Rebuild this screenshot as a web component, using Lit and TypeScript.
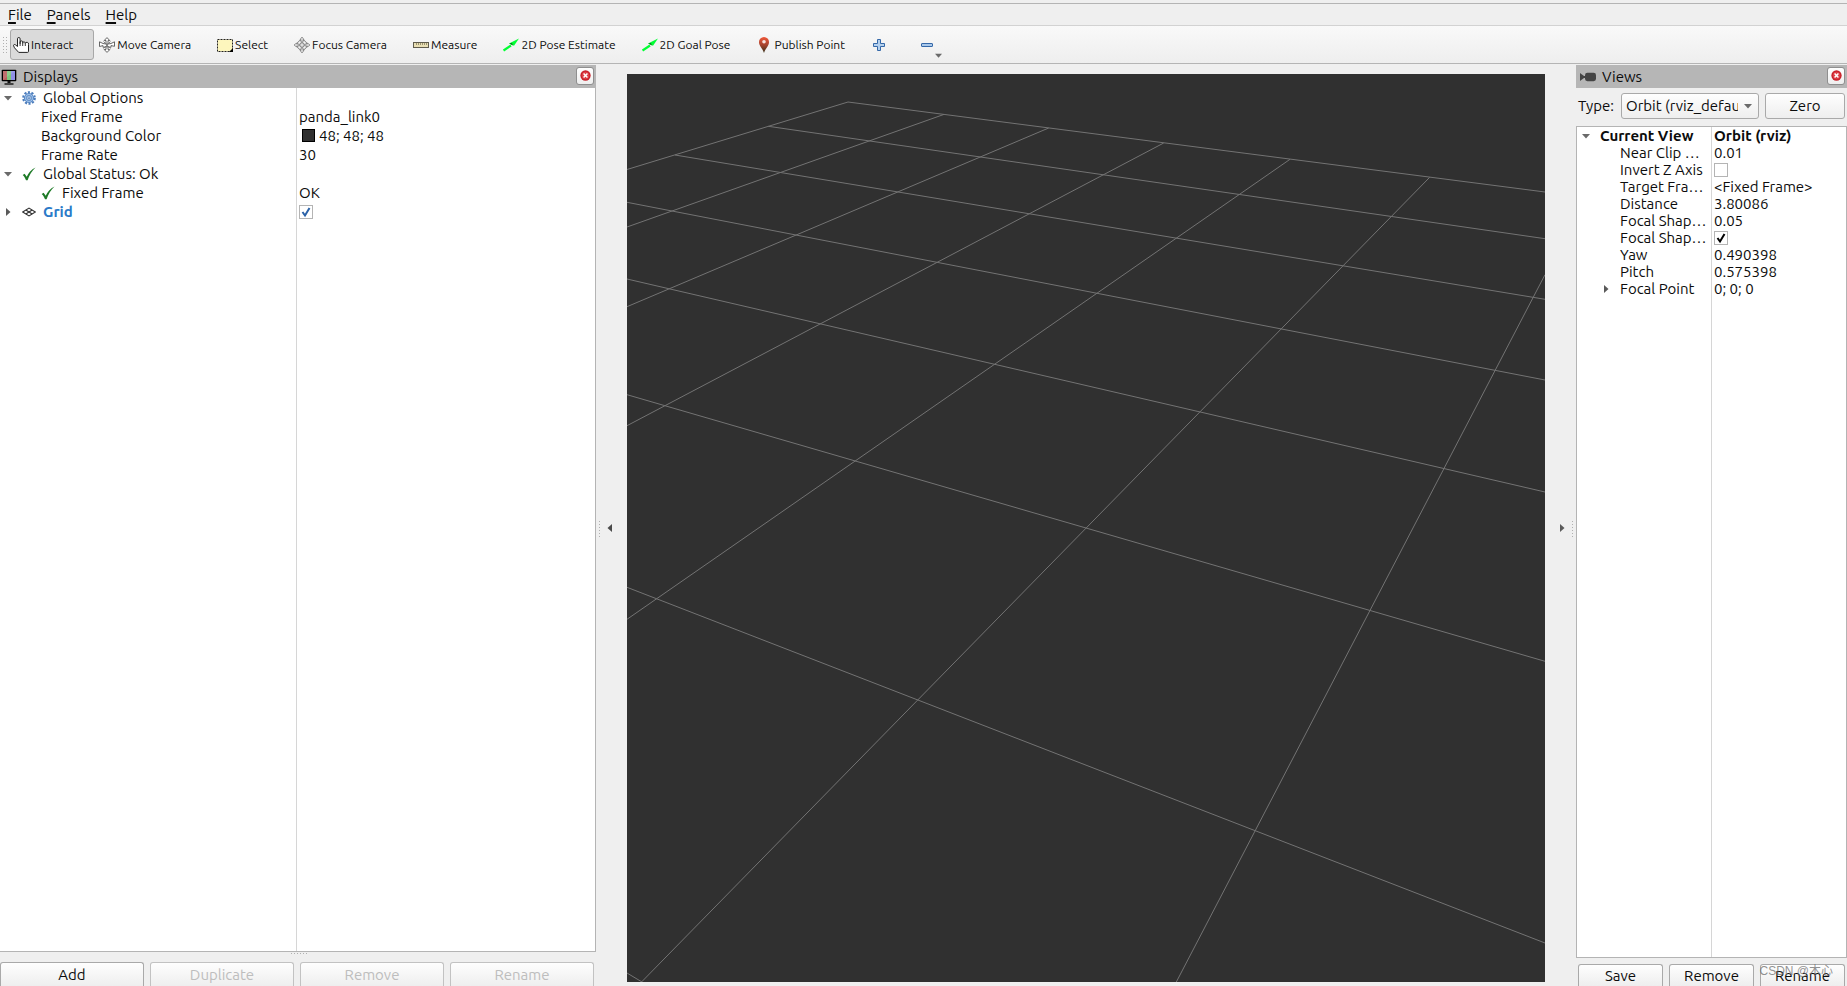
import { LitElement, html, css, svg, nothing, type TemplateResult } from "lit";
import { customElement, property } from "lit/decorators.js";

type Row = {
  id: string;
  label: string;
  depth: number;
  open?: boolean;
  icon?: string;
  strong?: boolean;
  link?: boolean;
  value?: string;
  swatch?: string;
  checked?: boolean;
};

const icons: Record<string, TemplateResult> = {
  hand: svg`<path d="M4.500 9.500V1.800a1.300 1.300 0 0 1 2.600 0V6.500V5.200a1.200 1.200 0 0 1 2.600 0v1.300a1.200 1.200 0 0 1 2.600-.6v.6a1.200 1.200 0 0 1 3.200 .9V14.400a1 1 0 0 1-1 1H5.700L1.500 10.800 .5 8.600c0-1.200 1.400-1.400 2.200-.6z" fill="#fff" stroke="#222" stroke-width="1" stroke-linejoin="round"/><path d="M7.100 6v3M9.700 6.500v2.500M12.300 6.500v2.500" stroke="#222" stroke-width=".9" fill="none"/>`,
  move: svg`<g fill="#fff" stroke="#555" stroke-width=".9" stroke-linejoin="round"><path d="M8 .6l2.800 3H9v9h1.800L8 15.400l-2.800-2.900H7v-9H5.200z"/><path d="M.5 4.800L4 6.500 8 7.200l4-.7 3.500-1.700v4.500L12 8.600v1.700L8 9.600l-4 .7V8.600L.5 9.500z"/></g><path d="M4.500 4.500l7 7M11.500 4.500l-7 7" stroke="#777" stroke-width=".9"/>`,
  select: svg`<rect x=".5" y="2.500" width="15" height="12" fill="#fdf6bd" stroke="#222" stroke-dasharray="2 1"/><path d="M16 11v4h-4z" fill="#000"/>`,
  focus: svg`<g fill="none" stroke="#777"><circle cx="8" cy="8" r="5"/><circle cx="8" cy="8" r="2.300" fill="#ddd"/></g><g fill="#e4e4e4" stroke="#777" stroke-width=".7"><path d="M7 5V2.500H6L8 0l2 2.500H9V5zM7 11v2.500H6L8 16l2-2.500H9V11zM5 7H2.500V6L0 8l2.500 2V9H5zM11 7h2.500V6L16 8l-2.500 2V9H11z"/></g>`,
  measure: svg`<rect x=".5" y="5.500" width="15" height="5" fill="#e9dfb4" stroke="#5f5b4c"/><path d="M3.500 6v2M5.500 6v2M7.500 6v2M9.500 6v2M11.500 6v2M13.500 6v2" stroke="#857d5c" stroke-width=".8"/>`,
  arrow: svg`<path d="M.5 13.500L8 8.500" stroke="#0f3" stroke-width="2.200"/><path d="M16 1.500L11 8.800 6 6.600z" fill="#0f3"/><path d="M6.200 6.600L10 8.400 9 6z" fill="#087a1c"/>`,
  pin: svg`<defs><linearGradient id="pg" x1="0" y1="0" x2="0" y2="1"><stop offset="0" stop-color="#f0573a"/><stop offset=".5" stop-color="#a5432e"/><stop offset="1" stop-color="#333018"/></linearGradient></defs><path d="M8 0a5 5 0 0 1 5 5.200C13 9 9.500 11 8 16 6.500 11 3 9 3 5.200A5 5 0 0 1 8 0z" fill="url(#pg)"/><circle cx="8" cy="4.800" r="1.800" fill="#f7e3df"/>`,
  plus: svg`<path d="M6.500 2.500h3v4h4v3h-4v4h-3v-4h-4v-3h4z" fill="#b4d0ee" stroke="#3568a8" stroke-linejoin="round"/>`,
  minus: svg`<rect x="2.500" y="6.500" width="11" height="3" rx=".5" fill="#a9c8ea" stroke="#3568a8"/>`,
  monitor: svg`<rect x=".7" y=".7" width="14.600" height="11.600" rx=".8" fill="#000"/><path d="M2 2h4v9H2z" fill="#b85c5c"/><path d="M6 2h4v9H6z" fill="#7cc67c"/><path d="M10 2h4v9h-4z" fill="#9090e8"/><path d="M2 11L14 2V2H2z" fill="#fff" opacity=".12"/><path d="M6.500 12h3v2h-3z" fill="#111"/><path d="M3.500 15h9" stroke="#111" stroke-width="1.400"/>`,
  camera: svg`<path d="M0 4l4 3v2L0 12z" fill="#444"/><rect x="5" y="3.800" width="11" height="8.400" rx="2.400" fill="#444"/><path d="M4 8h2" stroke="#444" stroke-width="2"/>`,
  gear: svg`<circle cx="8" cy="8" r="6.600" fill="none" stroke="#4a7cbc" stroke-width="2.400" stroke-dasharray="2.400 1.747"/><circle cx="8" cy="8" r="5.200" fill="#9cc0ea" stroke="#4a7cbc"/><rect x="5.600" y="5.600" width="4.800" height="4.800" rx="1" fill="#cfe0f4" stroke="#3f72b4"/><circle cx="8" cy="8" r="1" fill="#3f72b4"/>`,
  check: svg`<path d="M.8 9.200L3 7.800l2.400 3.400C7.400 6.800 10.500 3 15.400.6 11.400 4.600 8.200 9.600 6.400 15.200H4.600C3.600 12.600 2.400 10.600.8 9.200z" fill="#1d7a26"/>`,
  grid: svg`<g fill="none" stroke="#333" stroke-width="1.300"><path d="M.8 8L8 3.500 15.200 8 8 12.500z"/><path d="M4.400 5.700l7.200 4.600M11.600 5.700L4.400 10.300"/></g>`,
  close: svg`<circle cx="8" cy="8" r="7.500" fill="#c8202a"/><circle cx="8" cy="8" r="5.500" fill="#dd3f46"/><path d="M5.200 5.200l5.600 5.600M10.800 5.200l-5.600 5.600" stroke="#fff" stroke-width="2.200"/>`,
  down: svg`<path d="M0 4h16L8 13z" fill="#6a6a6a"/>`,
  right: svg`<path d="M4 0v16l9-8z" fill="#5a5a5a"/>`,
  left: svg`<path d="M12 0v16L3 8z" fill="#4a4a4a"/>`,
};

const icon = (name: string, size = 16) =>
  html`<svg width=${size} height=${size} viewBox="0 0 16 16" aria-hidden="true">${icons[name]}</svg>`;

const base = css`
  * { box-sizing: border-box; }
  svg { display: block; flex: none; }
  button, select {
    font: inherit;
    color: inherit;
    margin: 0;
  }
  .push {
    border: 1px solid #a9a9a9;
    border-radius: 3px;
    background: linear-gradient(#fefefe, #eeeeee);
    padding: 0;
  }
  .push:disabled { color: #bdbdbd; border-color: #c2c2c2; }
  .foot {
    display: grid;
    grid-auto-flow: column;
    grid-auto-columns: 1fr;
    gap: 6px;
    flex: none;
  }
  .foot .push {
    height: 100%;
    border-bottom: 0;
    border-radius: 3px 3px 0 0;
  }
`;

@customElement("property-tree")
class PropertyTree extends LitElement {
  @property({ attribute: false }) rows: Row[] = [];
  @property() label = "";

  static styles = [base, css`
    :host {
      display: block;
      background: linear-gradient(#d6d6d6, #d6d6d6) var(--name) 0 / 1px 100% no-repeat #fff;
      min-height: 0;
      overflow: hidden;
    }
    table {
      width: 100%;
      border-collapse: collapse;
      table-layout: fixed;
    }
    td, th {
      padding: 0;
      font-weight: 400;
      text-align: left;
      white-space: nowrap;
      height: var(--row);
      line-height: var(--row);
    }
    th { width: var(--name); }
    td { padding-left: 3px; }
    .name { display: flex; align-items: center; height: var(--row); }
    .d0 { padding-left: var(--edge, 4px); }
    .d1 { padding-left: var(--indent, 23px); }
    .twist { width: 8px; flex: none; margin-right: 10px; }
    .name .ico { margin-right: 7px; }
    .strong { font-weight: 700; }
    .link { color: #2a7ac8; }
    .val { display: flex; align-items: center; height: var(--row); }
    .swatch {
      width: 13px;
      height: 13px;
      border: 1px solid #000;
      margin: 0 4px 0 3px;
    }
    input {
      appearance: none;
      width: 14px;
      height: 14px;
      margin: 0;
      border: 1px solid #b4b4b4;
      background: #fff center / 12px 12px no-repeat;
    }
    input:checked {
      background-image: url("data:image/svg+xml,%3Csvg xmlns='http://www.w3.org/2000/svg' viewBox='0 0 12 12'%3E%3Cpath d='M2.500 6L5 9.500 9.500 2' fill='none' stroke='%23000' stroke-width='2'/%3E%3C/svg%3E");
    }
    .blue input:checked {
      background-image: url("data:image/svg+xml,%3Csvg xmlns='http://www.w3.org/2000/svg' viewBox='0 0 12 12'%3E%3Cpath d='M2.500 6L5 9.500 9.500 2' fill='none' stroke='%232a62a8' stroke-width='2'/%3E%3C/svg%3E");
    }
  `];

  private row(r: Row) {
    const text = r.checked === undefined ? html`<span>${r.label}</span>` : html`<label for=${r.id}>${r.label}</label>`;
    return html`<tr>
      <th scope="row">
        <div class="name d${r.depth} ${r.strong ? "strong" : ""} ${r.link ? "link" : ""}">
          <span class="twist">${r.open === undefined ? nothing : icon(r.open ? "down" : "right", 8)}</span>
          ${r.icon ? html`<span class="ico">${icon(r.icon, 14)}</span>` : nothing}
          ${text}
        </div>
      </th>
      <td>
        <div class="val ${r.strong ? "strong" : ""} ${r.link ? "blue" : ""}">
          ${r.swatch ? html`<span class="swatch" style="background:${r.swatch}"></span>` : nothing}
          ${r.checked === undefined ? r.value ?? nothing : html`<input type="checkbox" id=${r.id} .checked=${r.checked}>`}
        </div>
      </td>
    </tr>`;
  }

  render() {
    return html`<table aria-label=${this.label}>
      ${this.rows.map((r) => this.row(r))}
    </table>`;
  }
}

@customElement("dock-title")
class DockTitle extends LitElement {
  @property() icon = "";
  @property() text = "";

  static styles = [base, css`
    :host {
      display: flex;
      align-items: center;
      gap: 6px;
      height: 23px;
      flex: none;
      padding: 0 2px 0 var(--edge, 1px);
      background: #b6b6b6;
    }
    h2 { margin: 0; font-size: 15px; font-weight: 400; flex: 1; line-height: 20px; }
    .close {
      width: 18px;
      height: 18px;
      display: grid;
      place-items: center;
      border-color: #8f8f8f;
      margin-bottom: 2px;
    }
  `];

  render() {
    return html`${icon(this.icon)}<h2>${this.text}</h2>
      <button class="push close" aria-label="Close ${this.text}">${icon("close", 11)}</button>`;
  }
}

/* Grid of the 3D view, as line segments x1 y1 x2 y2 in view units. */
const gridLines = [
  [221, 28, 918, 118], [221, 28, 0, 95.5], [141.3, 52.3, 918, 164.7], [48, 81, 918, 225.3],
  [0, 128.3, 918, 306], [0, 205, 918, 418], [0, 320.7, 918, 587.3], [0, 513.3, 918, 869],
  [0, 899, 15, 908], [317, 40.4, 0, 153], [421.7, 54, 0, 232.7], [536.7, 69, 0, 351.7],
  [663, 85.3, 0, 545.3], [802.7, 103.3, 14.5, 908], [918, 200.7, 549.3, 908],
];

@customElement("app-root")
class AppRoot extends LitElement {
  static styles = [base, css`
    :host {
      display: flex;
      flex-direction: column;
      height: 100vh;
      overflow: hidden;
      position: relative;
      background: #efefef;
      color: #0c0c0c;
      font: 15px/20px Ubuntu, "Noto Sans", sans-serif;
    }
    .menu {
      display: flex;
      gap: 15px;
      border-top: 1px solid #b4b4b4;
      border-bottom: 1px solid #d2d2d2;
      margin-top: 3px;
      height: 23px;
      padding: 0 8px;
      flex: none;
    }
    .menu button { border: 0; background: none; padding: 0; line-height: 21px; }
    .menu u { text-underline-offset: 2px; text-decoration-thickness: 2px; }
    .tools {
      display: flex;
      align-items: center;
      gap: 2px;
      height: 38px;
      flex: none;
      padding-left: 2px;
      border-bottom: 1px solid #b4b4b4;
      background: linear-gradient(#f9f9f9, #eeeeee);
      font-size: 12px;
    }
    .dots {
      background: radial-gradient(circle, #b0b0b0 1px, transparent 1px) 0 0 / 3px 3px;
    }
    .tools .dots { width: 6px; height: 17px; }
    .tool {
      display: flex;
      align-items: center;
      gap: 2px;
      height: 31px;
      padding: 0 20px 0 2px;
      border: 1px solid transparent;
      border-radius: 3px;
      background: none;
      white-space: nowrap;
    }
    .tool.on { background: #dadada; border-color: #a8a8a8; }
    .tool.bare { padding: 0 14px 0 2px; }
    .tool.more { padding: 0 2px 0 14px; gap: 0; }
    .more svg + svg { align-self: flex-end; }
    .work {
      flex: 1;
      min-height: 0;
      display: grid;
      grid-template-columns: 596px minmax(0, 1fr) 271px;
      padding-top: 1px;
    }
    .dock { display: flex; flex-direction: column; min-height: 0; min-width: 0; }
    property-tree { flex: 1; }
    .displays property-tree {
      --row: 19px;
      --name: 296px;
      border: solid #b4b4b4;
      border-width: 0 1px 1px 0;
    }
    .displays .dots { width: 18px; height: 3px; margin-left: 290px; }
    .displays .foot { height: 24px; margin: 7px 2px 0 0; }
    .displays .foot .push { line-height: 22px; }
    .views dock-title { --edge: 4px; }
    .views property-tree {
      --row: 17px;
      --name: 134px;
      --edge: 5px;
      --indent: 25px;
      border: 1px solid #b4b4b4;
    }
    .views .foot { height: 22px; margin: 6px 2px 0 2px; }
    .views .foot .push { padding-top: 1px; }
    .type {
      display: flex;
      align-items: center;
      gap: 6px;
      padding: 5px 2px 7px;
    }
    .type label { flex: 1; }
    .pick { position: relative; width: 138px; }
    .pick svg { position: absolute; right: 7px; top: 9px; pointer-events: none; }
    select.push {
      appearance: none;
      width: 100%;
      height: 26px;
      padding: 0 20px 0 4px;
      display: block;
    }
    .type > .push { width: 80px; height: 26px; }
    .view {
      display: grid;
      grid-template-columns: 31px minmax(0, 1fr) 31px;
      padding: 9px 0 4px;
    }
    .scene { display: block; width: 100%; height: 100%; background: #303030; }
    .side {
      display: flex;
      align-items: center;
      justify-content: space-between;
      border: 0;
      padding: 0 13px 0 2px;
      background: none;
    }
    .side.end { flex-direction: row-reverse; padding: 0 2px 0 13px; }
    .side .dots { width: 3px; height: 17px; }
    .mark {
      position: absolute;
      right: 14px;
      bottom: 6px;
      font: 12px/18px "Liberation Sans", "Noto Sans CJK SC", sans-serif;
      color: rgba(110, 110, 110, 0.75);
      pointer-events: none;
    }
  `];

  private displays: Row[] = [
    { id: "go", label: "Global Options", depth: 0, open: true, icon: "gear" },
    { id: "ff", label: "Fixed Frame", depth: 1, value: "panda_link0" },
    { id: "bg", label: "Background Color", depth: 1, value: "48; 48; 48", swatch: "#303030" },
    { id: "fr", label: "Frame Rate", depth: 1, value: "30" },
    { id: "gs", label: "Global Status: Ok", depth: 0, open: true, icon: "check" },
    { id: "fs", label: "Fixed Frame", depth: 1, icon: "check", value: "OK" },
    { id: "grid", label: "Grid", depth: 0, open: false, icon: "grid", strong: true, link: true, checked: true },
  ];

  private views: Row[] = [
    { id: "cv", label: "Current View", depth: 0, open: true, strong: true, value: "Orbit (rviz)" },
    { id: "nc", label: "Near Clip …", depth: 1, value: "0.01" },
    { id: "iz", label: "Invert Z Axis", depth: 1, checked: false },
    { id: "tf", label: "Target Fra…", depth: 1, value: "<Fixed Frame>" },
    { id: "di", label: "Distance", depth: 1, value: "3.80086" },
    { id: "fz", label: "Focal Shap…", depth: 1, value: "0.05" },
    { id: "fx", label: "Focal Shap…", depth: 1, checked: true },
    { id: "yw", label: "Yaw", depth: 1, value: "0.490398" },
    { id: "pt", label: "Pitch", depth: 1, value: "0.575398" },
    { id: "fp", label: "Focal Point", depth: 1, open: false, value: "0; 0; 0" },
  ];

  private tools = [
    ["hand", "Interact"], ["move", "Move Camera"], ["select", "Select"], ["focus", "Focus Camera"],
    ["measure", "Measure"], ["arrow", "2D Pose Estimate"], ["arrow", "2D Goal Pose"], ["pin", "Publish Point"],
  ];

  render() {
    return html`
      <nav class="menu" aria-label="Menu">
        ${["File", "Panels", "Help"].map((m) => html`<button><u>${m[0]}</u>${m.slice(1)}</button>`)}
      </nav>
      <div class="tools" role="toolbar">
        <span class="dots"></span>
        ${this.tools.map(([i, t], n) => html`<button class="tool ${n === 0 ? "on" : ""}">${icon(i)}${t}</button>`)}
        <button class="tool bare" aria-label="Add tool">${icon("plus")}</button>
        <button class="tool more" aria-label="Remove tool">${icon("minus")}${icon("down", 7)}</button>
      </div>
      <main class="work">
        <section class="dock displays">
          <dock-title icon="monitor" text="Displays"></dock-title>
          <property-tree label="Displays" .rows=${this.displays}></property-tree>
          <span class="dots"></span>
          <div class="foot">
            <button class="push">Add</button>
            <button class="push" disabled>Duplicate</button>
            <button class="push" disabled>Remove</button>
            <button class="push" disabled>Rename</button>
          </div>
        </section>
        <section class="view">
          <button class="side" aria-label="Hide left panel"><span class="dots"></span>${icon("left", 8)}</button>
          <svg class="scene" viewBox="0 0 918 908" preserveAspectRatio="xMinYMin slice">
            ${gridLines.map(([a, b, c, d]) => svg`<line x1=${a} y1=${b} x2=${c} y2=${d} stroke="#737373"/>`)}
          </svg>
          <button class="side end" aria-label="Hide right panel"><span class="dots"></span>${icon("right", 8)}</button>
        </section>
        <section class="dock views">
          <dock-title icon="camera" text="Views"></dock-title>
          <div class="type">
            <label for="type">Type:</label>
            <div class="pick">
              <select class="push" id="type"><option>Orbit (rviz_default_plugins)</option></select>
              ${icon("down", 8)}
            </div>
            <button class="push">Zero</button>
          </div>
          <property-tree label="Views" .rows=${this.views}></property-tree>
          <div class="foot">
            <button class="push">Save</button>
            <button class="push">Remove</button>
            <button class="push">Rename</button>
          </div>
        </section>
      </main>
      <span class="mark">CSDN @木心</span>
    `;
  }
}
